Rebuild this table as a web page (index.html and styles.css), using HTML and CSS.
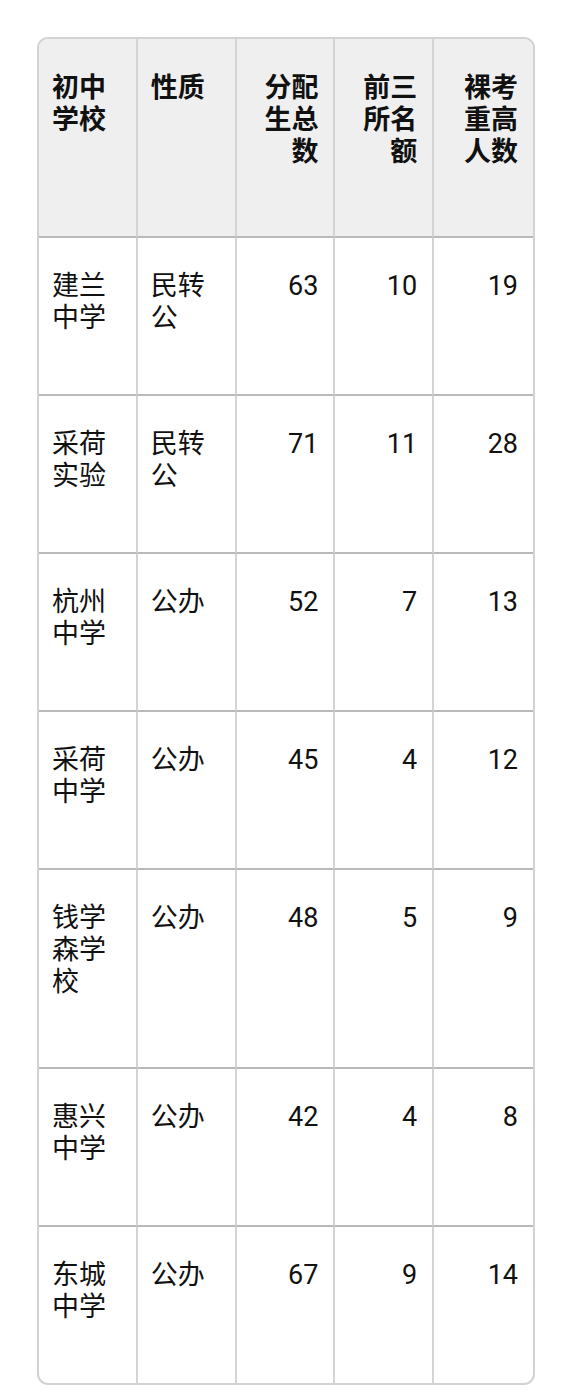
FILE: index.html
```html
<!DOCTYPE html>
<html lang="zh">
<head>
<meta charset="utf-8">
<title>分配生名额</title>
<link rel="stylesheet" href="styles.css">
</head>
<body>
<div class="page">
<table class="grid">
  <thead>
    <tr class="head">
      <th class="l">初中学校</th>
      <th class="l">性质</th>
      <th class="r">分配生总数</th>
      <th class="r">前三所名额</th>
      <th class="r">裸考重高人数</th>
    </tr>
  </thead>
  <tbody>
    <tr class="row"><td class="l">建兰中学</td><td class="l">民转公</td><td class="r">63</td><td class="r">10</td><td class="r">19</td></tr>
    <tr class="row"><td class="l">采荷实验</td><td class="l">民转公</td><td class="r">71</td><td class="r">11</td><td class="r">28</td></tr>
    <tr class="row"><td class="l">杭州中学</td><td class="l">公办</td><td class="r">52</td><td class="r">7</td><td class="r">13</td></tr>
    <tr class="row"><td class="l">采荷中学</td><td class="l">公办</td><td class="r">45</td><td class="r">4</td><td class="r">12</td></tr>
    <tr class="row tall"><td class="l">钱学森学校</td><td class="l">公办</td><td class="r">48</td><td class="r">5</td><td class="r">9</td></tr>
    <tr class="row"><td class="l">惠兴中学</td><td class="l">公办</td><td class="r">42</td><td class="r">4</td><td class="r">8</td></tr>
    <tr class="row last"><td class="l">东城中学</td><td class="l">公办</td><td class="r">67</td><td class="r">9</td><td class="r">14</td></tr>
  </tbody>
</table>
</div>
</body>
</html>
```

FILE: styles.css
```css
html, body {
  margin: 0;
  padding: 0;
  background: #ffffff;
}
.page {
  padding: 37px 0 0 37px;
}
.grid {
  width: 498px;
  table-layout: fixed;
  border-collapse: separate;
  border-spacing: 0;
  border: 2px solid #d2d2d2;
  border-radius: 11px;
  overflow: hidden;
  font-family: Roboto, "Noto Sans CJK SC", sans-serif;
  font-size: 27px;
  line-height: 32px;
  color: #111111;
}
.grid th,
.grid td {
  vertical-align: top;
  padding: 0 15px 0 13px;
  border-right: 2px solid #d4d4d4;
  border-bottom: 2px solid #b9b9b9;
  word-break: break-all;
}
.grid th:last-child,
.grid td:last-child {
  border-right: none;
}
.grid tr.last td {
  border-bottom: none;
}
.grid th {
  font-weight: 700;
  background: #efefef;
  padding-top: 33px;
}
.grid td {
  font-weight: 400;
  padding-top: 32px;
}
.head {
  height: 199px;
}
.row {
  height: 158px;
}
.row.tall {
  height: 199px;
}
.row.last {
  height: 156px;
}
.l {
  text-align: left;
}
.r {
  text-align: right;
}
```
